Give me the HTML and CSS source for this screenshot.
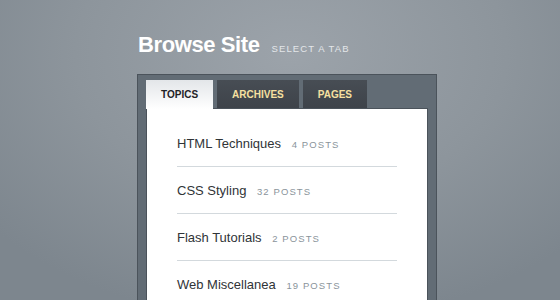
FILE: index.html
```html
<!DOCTYPE html>
<html lang="en">
<head>
<meta charset="UTF-8">
<title>Browse Site</title>
<meta name="viewport" content="width=device-width, initial-scale=1">
<link rel="stylesheet" href="styles.css">
</head>

<body>

<div class="wrap">

<div class="head">
<h1>Browse Site</h1>
<span class="sub">SELECT A TAB</span>
</div>

<div class="box">

<ul class="tabs">
<li class="tab active">TOPICS</li>
<li class="tab">ARCHIVES</li>
<li class="tab">PAGES</li>
</ul>

<div class="panel">
<ul class="list">
<li>HTML Techniques <span class="count">4 posts</span></li>
<li>CSS Styling <span class="count">32 posts</span></li>
<li>Flash Tutorials <span class="count">2 posts</span></li>
<li>Web Miscellanea <span class="count">19 posts</span></li>
</ul>
</div>

</div>

</div>

</body>
</html>
```

FILE: styles.css
```css
html,body{
height:100%;
}

body{
margin:0;
overflow:hidden;
font-family:"Liberation Sans",Arial,sans-serif;
background:radial-gradient(ellipse 70% 90% at 52% 18%,#9ca3aa 0%,#8d959c 55%,#7d868e 100%);
}

.wrap{
padding:32px 0 0 137px;
width:300px;
}

.head{
display:flex;
align-items:baseline;
gap:12px;
padding-left:1px;
}

.head h1{
margin:0;
font-size:22px;
line-height:26px;
font-weight:bold;
color:#fff;
letter-spacing:-0.4px;
}

.sub{
font-size:9.5px;
letter-spacing:1.1px;
color:#e3e6e9;
}

.box{
margin-top:16px;
background:#626c75;
border:1px solid #4b535b;
padding:5px 8px 0;
}

.tabs{
display:flex;
gap:4px;
margin:0;
padding:0;
list-style:none;
}

.tab{
padding:2px 15px 0;
line-height:26px;
font-size:10px;
font-weight:bold;
color:#f6e0a0;
background:linear-gradient(#474d54,#3e434a);
}

.tab.active{
color:#1f2327;
background:linear-gradient(#e3e6e9,#fff);
margin-bottom:-1px;
padding-bottom:1px;
position:relative;
z-index:1;
}

.panel{
background:#fff;
border:1px solid #4b535b;
border-bottom:0;
}

.list{
list-style:none;
margin:0 30px;
padding:11px 0 0;
}

.list li{
padding:16px 0 14px;
height:16px;
line-height:16px;
font-size:13px;
color:#303437;
border-bottom:1px solid #d3d9dd;
}

.count{
margin-left:7px;
font-size:9.5px;
line-height:10px;
letter-spacing:1.1px;
text-transform:uppercase;
color:#8a949b;
}
```
